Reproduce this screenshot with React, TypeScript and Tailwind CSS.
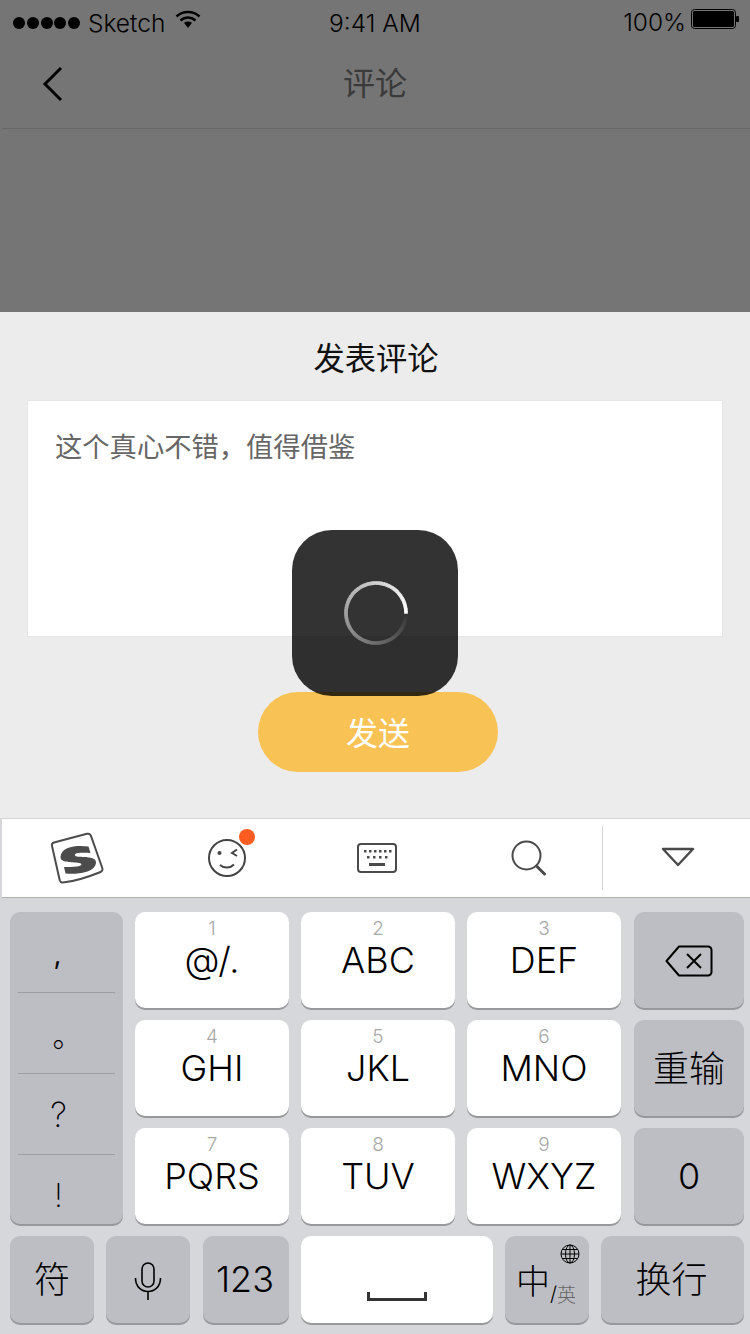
import React from "react";

const latin = "font-['Inter','Liberation_Sans','Noto_Sans_CJK_SC',sans-serif]";
const cjk = "font-['Noto_Sans_CJK_SC',sans-serif]";

function Spinner() {
  const n = 120;
  const r = 30;
  const cx = 32;
  const cy = 32;
  const segs = [];
  for (let i = 0; i < n; i++) {
    const a0 = (i / n) * Math.PI * 2;
    const a1 = ((i + 1.5) / n) * Math.PI * 2;
    const x0 = cx + r * Math.cos(a0);
    const y0 = cy + r * Math.sin(a0);
    const x1 = cx + r * Math.cos(a1);
    const y1 = cy + r * Math.sin(a1);
    const t = i / n;
    const v = Math.round(52 + 203 * Math.pow(t, 0.9));
    segs.push(
      <path key={i} d={`M${x0} ${y0}A${r} ${r} 0 0 1 ${x1} ${y1}`} stroke={`rgb(${v},${v},${v})`} strokeWidth={3.6} fill="none" />
    );
  }
  return (
    <svg width="64" height="64" viewBox="0 0 64 64">
      {segs}
    </svg>
  );
}

function Key({ num, label, w }: { num: string; label: string; w: string }) {
  return (
    <div className={`${w} h-[96px] bg-white rounded-[10px] shadow-[0_2px_0_#97989c] flex flex-col items-center text-black`}>
      <span className="text-[19px] leading-[20px] mt-[7px] text-[#a8a8a8] font-light">{num}</span>
      <span className="text-[36px] leading-[40px] mt-[1px] font-light">{label}</span>
    </div>
  );
}

function GrayKey({ w, h, children }: { w: string; h: string; children: React.ReactNode }) {
  return (
    <div className={`${w} ${h} bg-[#bdbec3] rounded-[10px] shadow-[0_2px_0_#97989c] flex items-center justify-center text-black`}>
      {children}
    </div>
  );
}

export default function App() {
  return (
    <div className={`relative w-[750px] h-[1334px] overflow-hidden bg-[#d5d7db] ${latin}`}>
      {/* dimmed page */}
      <div className="h-[312px] pl-[2px] bg-[#757575] flex flex-col">
        <div className="h-[40px] relative flex items-center justify-between text-[24px] font-light text-black">
          <div className="flex items-center ml-[11px] mt-[5px]">
            <div className="flex gap-[1.75px]">
              {[0, 1, 2, 3, 4].map((i) => (
                <span key={i} className="w-[12px] h-[12px] rounded-full bg-black" />
              ))}
            </div>
            <span className="ml-[8px] leading-[30px] text-[24.5px]">Sketch</span>
            <svg className="ml-[10px] -mt-[6px]" width="26" height="19" viewBox="0 0 26 19" fill="none">
              <path d="M1.5 6.5C8 .5 18 .5 24.5 6.5" stroke="#000" strokeWidth="2.4" />
              <path d="M5.5 10.5C10 6.5 16 6.5 20.5 10.5" stroke="#000" strokeWidth="2.4" />
              <path d="M9 12.8C11.5 11 14.5 11 17 12.8L13 18Z" fill="#000" />
            </svg>
          </div>
          <span className="absolute left-[327px] top-[8px] leading-[30px] text-[24.5px]">9:41 AM</span>
          <div className="flex items-center mr-[11px] mt-[3px]">
            <span className="leading-[30px] text-[24.5px]">100%</span>
            <svg className="ml-[5px] -mt-[5px]" width="48" height="20" viewBox="0 0 48 20">
              <rect x="0.5" y="0.5" width="44" height="19" rx="3" fill="none" stroke="#000" strokeWidth="1" />
              <rect x="2" y="2" width="41" height="16" rx="1.5" fill="#000" />
              <rect x="45" y="7" width="3" height="6" rx="1" fill="#000" />
            </svg>
          </div>
        </div>
        <div className="h-[88px] relative flex items-center justify-center border-b border-[#666666] box-content -mb-px">
          <svg className="absolute left-[39px] top-[26px]" width="24" height="36" viewBox="0 0 24 36" fill="none">
            <path d="M20 2L4 18l16 16" stroke="#000" strokeWidth="3" />
          </svg>
          <span className={`${cjk} text-[32px] leading-[40px] text-[#3a3a3a] font-normal -mt-[7px] ml-[-2px]`}>评论</span>
        </div>
      </div>

      {/* comment sheet */}
      <div className="h-[506px] pl-[2px] bg-[#ececec] flex flex-col items-center">
        <h1 className={`${cjk} text-[31.3px] leading-[40px] mt-[25px] text-[#111] font-normal`}>发表评论</h1>
        <div className="w-[696px] ml-[-2px] h-[237px] mt-[23px] bg-white border border-[#e6e6e6] px-[27px] pt-[27px]">
          <p className={`${cjk} text-[27.3px] leading-[34px] text-[#666]`}>这个真心不错，值得借鉴</p>
        </div>
        <button className={`${cjk} w-[240px] h-[80px] ml-[4px] mt-[55px] rounded-[40px] bg-[#f9c254] text-white text-[32px] pb-[3px]`}>发送</button>
      </div>

      {/* toolbar */}
      <div className="h-[80px] ml-[2px] bg-white border-t border-b border-t-[#d4d4d4] border-b-[#b0b0b0] flex items-center relative">
        <div className="w-[150px] flex justify-center">
          <svg width="54" height="52" viewBox="0 0 54 52" fill="none">
            <path d="M2 14C1.5 12 2.5 11 4 10.5L37 1.8C39 1.3 40 2 40.8 3.5L52.3 36C53 38 52 39.5 50 40.2C38 45 24 49.5 13 50.5C11.5 50.7 10.3 50 9.8 48.5Z" stroke="#4c4c4c" strokeWidth="2" />
            <path d="M38.5 14.5C28 13 11 14 10.5 25C10.2 31 22 30 29 31C33 31.6 32 34 27 34.5C23 35 17 35 14 35L15.5 41.5C26 42.5 45.5 41 46 30.5C46.3 24 33 25.5 27 24.5C24 24 24 21.5 28 21C32 20.5 37 20.7 40.5 21Z" fill="#4c4c4c" />
          </svg>
        </div>
        <div className="w-[150px] relative flex justify-center">
          <svg width="40" height="40" viewBox="0 0 40 40" fill="none">
            <circle cx="20" cy="20" r="18" stroke="#444" strokeWidth="2" />
            <circle cx="12.5" cy="15" r="2" fill="#444" />
            <path d="M30 11.5L25 15l5 3" stroke="#444" strokeWidth="2" />
            <path d="M13 27c4 3.5 10 3.5 14-.5" stroke="#444" strokeWidth="2" />
          </svg>
          <span className="absolute left-[87px] top-[-9px] w-[16px] h-[16px] rounded-full bg-[#ff5c22]" />
        </div>
        <div className="w-[156px] flex justify-center pr-[7px]">
          <svg width="40" height="30" viewBox="0 0 40 30" fill="none">
            <rect x="1" y="1" width="38" height="28" rx="3" stroke="#4a4a4a" strokeWidth="2" />
            <g fill="#4a4a4a">
              <rect x="7" y="7" width="2.5" height="2.5" /><rect x="12" y="7" width="2.5" height="2.5" /><rect x="17" y="7" width="2.5" height="2.5" />
              <rect x="22" y="7" width="2.5" height="2.5" /><rect x="27" y="7" width="2.5" height="2.5" /><rect x="32" y="7" width="2.5" height="2.5" />
              <rect x="10" y="13" width="2.5" height="2.5" /><rect x="16" y="13" width="2.5" height="2.5" /><rect x="22" y="13" width="2.5" height="2.5" /><rect x="28" y="13" width="2.5" height="2.5" />
              <rect x="12" y="20" width="16" height="3" />
            </g>
          </svg>
        </div>
        <div className="w-[144px] flex justify-center pr-[2px]">
          <svg width="36" height="36" viewBox="0 0 36 36" fill="none">
            <circle cx="15.5" cy="15.5" r="14" stroke="#4a4a4a" strokeWidth="2" />
            <path d="M25.5 26l8 8" stroke="#4a4a4a" strokeWidth="3" strokeLinecap="round" />
          </svg>
        </div>
        <div className="w-px h-[64px] bg-[#d4d4d4]" />
        <div className="flex-1 flex justify-center pl-[3px]">
          <svg width="36" height="22" viewBox="0 0 36 22" fill="none" className="mt-[-2px]">
            <path d="M3 3h30L18 19Z" stroke="#4a4a4a" strokeWidth="2.4" strokeLinejoin="round" />
          </svg>
        </div>
      </div>

      {/* keyboard */}
      <div className="flex flex-col gap-[12px] pl-[10px] pr-[6px] pt-[14px]">
        <div className="flex h-[312px]">
          <div className="w-[113px] h-[312px] bg-[#bdbec3] rounded-[10px] shadow-[0_2px_0_#97989c] flex flex-col px-[8px] text-black">
            <div className="h-[81px] shrink-0 border-b border-[#9d9ea3] flex items-center justify-center pr-[18px]">
              <span className="text-[28px] leading-[30px] font-normal mt-[4px]">,</span>
            </div>
            <div className="h-[81px] shrink-0 border-b border-[#9d9ea3] flex items-center justify-center pl-[2px]">
              <span className={`${cjk} text-[30px] leading-[30px] mt-[2px] font-light`}>。</span>
            </div>
            <div className="h-[81px] shrink-0 border-b border-[#9d9ea3] flex items-center justify-center pr-[16px]">
              <span className="text-[34px] leading-[30px] font-extralight mt-[2px]">?</span>
            </div>
            <div className="flex-1 flex items-center justify-center pr-[16px]">
              <span className="text-[32px] leading-[30px] font-extralight mt-[12px]">!</span>
            </div>
          </div>
          <div className="ml-[12px] grid grid-cols-[154px_154px_154px] gap-[12px]">
            <Key w="w-[154px]" num="1" label="@/." />
            <Key w="w-[154px]" num="2" label="ABC" />
            <Key w="w-[154px]" num="3" label="DEF" />
            <Key w="w-[154px]" num="4" label="GHI" />
            <Key w="w-[154px]" num="5" label="JKL" />
            <Key w="w-[154px]" num="6" label="MNO" />
            <Key w="w-[154px]" num="7" label="PQRS" />
            <Key w="w-[154px]" num="8" label="TUV" />
            <Key w="w-[154px]" num="9" label="WXYZ" />
          </div>
          <div className="ml-[13px] flex flex-col gap-[12px]">
            <GrayKey w="w-[110px]" h="h-[96px]">
              <svg width="50" height="34" viewBox="0 0 50 34" fill="none" className="mt-[2px]">
                <path d="M15 2.5H44a3.5 3.5 0 0 1 3.5 3.5V28a3.5 3.5 0 0 1-3.5 3.5H15L2.5 17Z" stroke="#000" strokeWidth="2" strokeLinejoin="round" />
                <path d="M23 10l14 14M37 10L23 24" stroke="#000" strokeWidth="2" />
              </svg>
            </GrayKey>
            <GrayKey w="w-[110px]" h="h-[96px]">
              <span className={`${cjk} text-[36px] font-light mb-[4px]`}>重输</span>
            </GrayKey>
            <GrayKey w="w-[110px]" h="h-[96px]">
              <span className="text-[36px] font-light">0</span>
            </GrayKey>
          </div>
        </div>
        <div className="flex h-[87px] gap-[12px]">
          <GrayKey w="w-[84px]" h="h-[87px]">
            <span className={`${cjk} text-[36px] font-light mb-[5px]`}>符</span>
          </GrayKey>
          <GrayKey w="w-[84px]" h="h-[87px]">
            <svg width="28" height="38" viewBox="0 0 28 38" fill="none" className="mt-[3px]">
              <rect x="8" y="1" width="12" height="24" rx="6" stroke="#000" strokeWidth="1.6" />
              <path d="M1.5 16c0 18 25 18 25 0M14 30v8" stroke="#000" strokeWidth="1.6" />
            </svg>
          </GrayKey>
          <GrayKey w="w-[86px] ml-px" h="h-[87px]">
            <span className="text-[36px] font-light mb-[2px] mr-[2px]">123</span>
          </GrayKey>
          <div className="w-[192px] h-[87px] bg-white rounded-[10px] shadow-[0_2px_0_#97989c] flex justify-center">
            <div className="w-[60px] h-[9px] mt-[56px] border-x-[3px] border-b-[3px] border-[#333]" />
          </div>
          <div className="relative">
            <GrayKey w="w-[84px]" h="h-[87px]">
              <span className={`${cjk} text-[34px] font-light mt-[1px] mr-[2px] leading-[40px] flex items-end`}>
                中
                <span className="text-[20px] leading-[26px] mb-[-7px] flex items-end">
                  <span className={`${latin} font-light`}>/</span>
                  <span className="text-[#666] text-[19px]">英</span>
                </span>
              </span>
            </GrayKey>
            <svg className="absolute left-[55px] top-[8px]" width="20" height="20" viewBox="0 0 20 20" fill="none" stroke="#000" strokeWidth="1">
              <circle cx="10" cy="10" r="9" />
              <ellipse cx="10" cy="10" rx="4.5" ry="9" />
              <path d="M10 1v18M1 10h18M2.5 5.5h15M2.5 14.5h15" />
            </svg>
          </div>
          <GrayKey w="w-[143px]" h="h-[87px]">
            <span className={`${cjk} text-[36px] font-light mb-[5px] mr-[2px]`}>换行</span>
          </GrayKey>
        </div>
      </div>

      {/* loading HUD */}
      <div className="absolute left-[292px] top-[530px] w-[166px] h-[166px] rounded-[40px] bg-black/80 flex items-center justify-center">
        <div className="ml-[2px]">
          <Spinner />
        </div>
      </div>
    </div>
  );
}
